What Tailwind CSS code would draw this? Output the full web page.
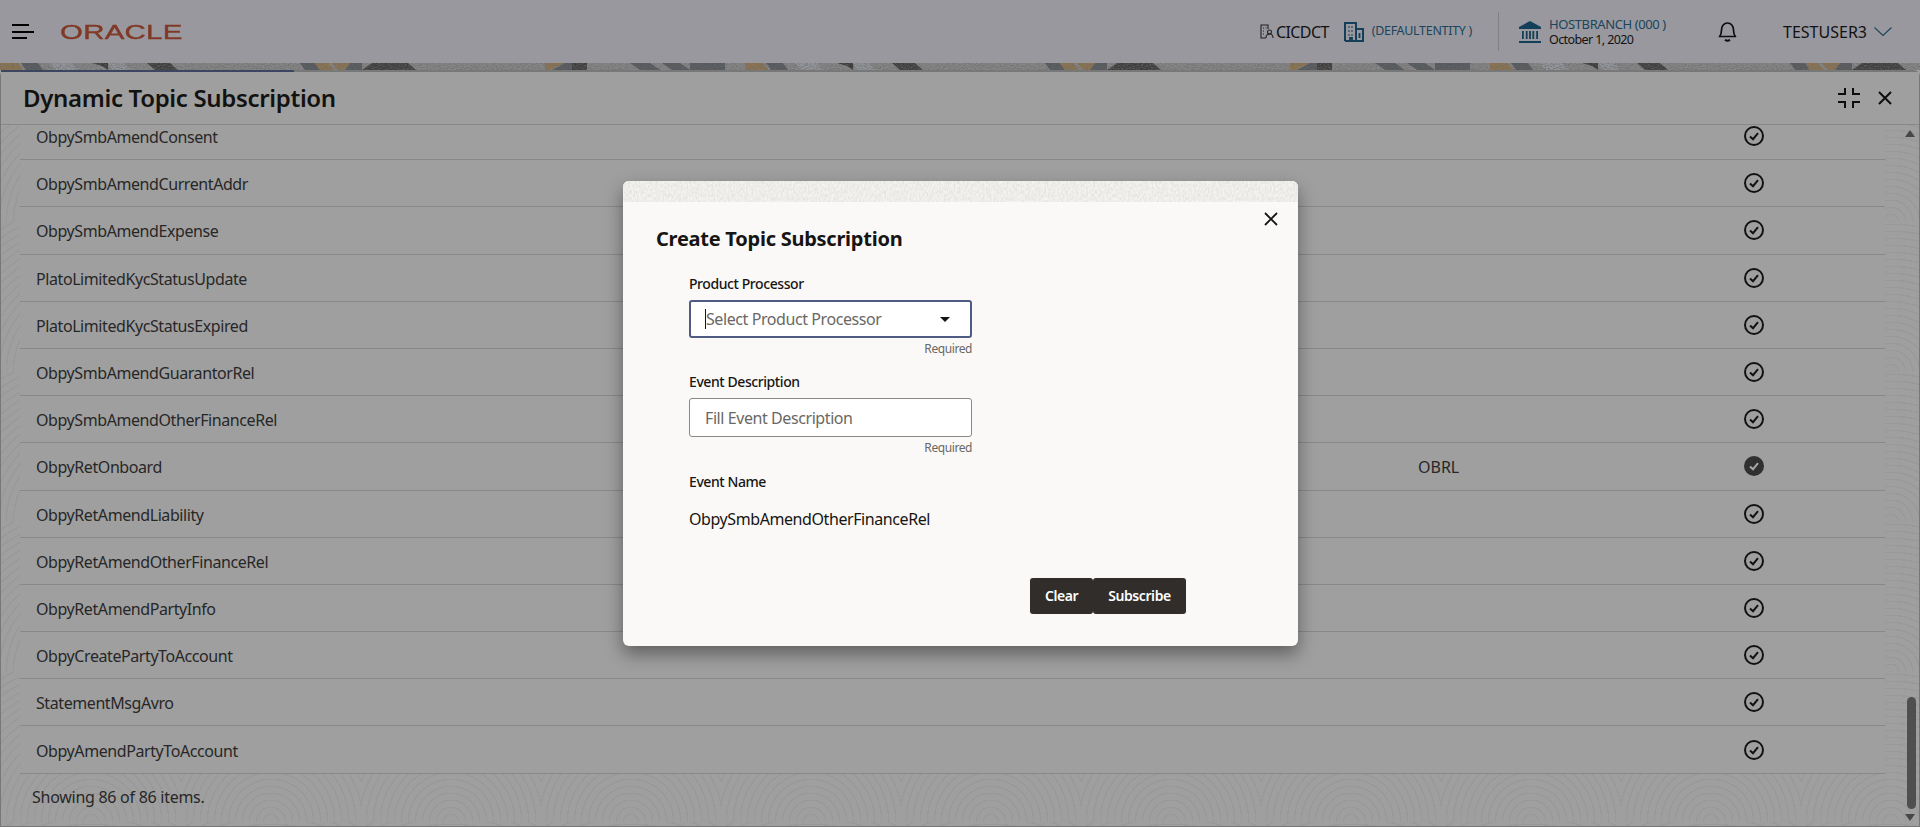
<!DOCTYPE html>
<html lang="en">
<head>
  <meta charset="utf-8">
  <meta name="viewport" content="width=device-width, initial-scale=1.0">
  <title>Dynamic Topic Subscription</title>
  <script src="https://cdn.jsdelivr.net/npm/@tailwindcss/browser@4"></script>
</head>
<body class="relative h-[827px] w-full overflow-hidden bg-[#f5f5f5] font-['Noto_Sans',sans-serif] tracking-[-0.42px] text-[#3c3c3c]">

  <!-- top bar -->
  <header class="flex h-[63px] items-center bg-[#eceaf4] text-[#1c1c1c]">
    <button class="ml-3 flex w-[22px] flex-col gap-[4.6px]">
      <span class="h-[2px] w-[17px] bg-black"></span>
      <span class="h-[2px] w-[22px] bg-black"></span>
      <span class="h-[2px] w-[15px] bg-black"></span>
    </button>
    <span class="ml-[26px] w-[120px] origin-left scale-x-[1.4] font-['Liberation_Sans',sans-serif] text-[21px] leading-none tracking-[0.2px] text-[#c4583a] [-webkit-text-stroke:0.4px_#c4583a]">ORACLE</span>

    <div class="ml-auto flex items-center">
      <svg class="h-[15px] w-[14px]" viewBox="0 0 14 15" fill="none" stroke="#333" stroke-width="1.1"><path d="M6 14H1V1h7v4"/><path d="M3 4h1M5.500 4h1M3 7h1M3 10h1"/><circle cx="9.500" cy="8" r="2"/><path d="M6 14c0-3 1.500-4 3.500-4s3.500 1 3.500 4"/></svg>
      <span class="ml-[2px] text-base tracking-[-0.6px]">CICDCT</span>
      <svg class="ml-[15px] h-[20px] w-[20px]" viewBox="0 0 20 20" fill="none" stroke="#1f6288" stroke-width="2"><path d="M1 19V1h11v18M12 7h7v12H1"/><path d="M4.500 5h1M7.500 5h1M4.500 9h1M7.500 9h1M4.500 13h1M7.500 13h1M15.500 11v5M6 19v-3h2v3" stroke-width="1.800"/></svg>
      <span class="ml-2 text-[12.5px] tracking-[-0.3px] text-[#2b6a8e]">(DEFAULTENTITY )</span>
      <span class="ml-[26px] h-[39px] w-px bg-[#c9c7d2]"></span>
      <svg class="ml-[20px] h-[22px] w-[22px]" viewBox="0 0 22 22" fill="#1f6288"><path d="M11 0 22 6v2H0V6z"/><path d="M3 10h1.800v8H3zM6.800 10h1.800v8H6.800zM10.100 10h1.800v8h-1.800zM13.400 10h1.800v8h-1.800zM17.200 10H19v8h-1.800zM0 20h22v2H0z"/></svg>
      <div class="ml-2 flex w-[142px] flex-col text-[13px] leading-[15px]">
        <span class="tracking-[-0.4px] text-[#2b6a8e]">HOSTBRANCH (000 )</span>
        <span class="text-[12.5px] tracking-[-0.6px]">October 1, 2020</span>
      </div>
      <svg class="ml-[27px] h-[21px] w-[19px]" viewBox="0 0 19 21" fill="none" stroke="#141414" stroke-width="1.700"><path d="M1.500 15.500c1.500-1.500 2-3 2-6.500 0-4 2.500-7 6-7s6 3 6 7c0 3.500.5 5 2 6.500z" stroke-linejoin="round"/><path d="M7 18.800c1.500 1.200 3.500 1.200 5 0" stroke-width="2"/></svg>
      <span class="ml-[46px] text-base tracking-normal">TESTUSER3</span>
      <svg class="ml-[7px] mr-[28px] h-[9px] w-[18px]" viewBox="0 0 18 9" fill="none" stroke="#2b6a8e" stroke-width="1.100"><path d="M.5.5 9 8.500 17.500.5"/></svg>
    </div>
  </header>

  <!-- decorative strip under the bar, one tile repeats every 745px -->
  <svg class="block h-[7px] w-full" preserveAspectRatio="none">
    <defs>
      <pattern id="band" width="745" height="7" patternUnits="userSpaceOnUse">
        <rect width="745" height="7" fill="#d0d0d0"/>
        <polygon points="0,0 18,0 23,7 0,7" fill="#dcb478"/>
        <polygon points="21,0 38,0 43,7 26,7" fill="#83898d"/>
        <polygon points="50,0 72,0 78,7 56,7" fill="#e4e9ee"/>
        <polygon points="92,0 108,0 108,7 102,3" fill="#585755"/>
        <polygon points="108,0 124,0 130,7 112,7" fill="#e4e9ee"/>
        <polygon points="147,0 170,0 178,7 155,7" fill="#5e5d5a"/>
        <polygon points="300,0 315,0 320,7 305,7" fill="#83898d"/>
        <polygon points="315,0 328,0 334,7 320,7" fill="#dcb478"/>
        <polygon points="332,0 350,0 345,7 338,7" fill="#dcb478"/>
        <polygon points="350,0 362,0 362,7 345,7" fill="#83898d"/>
        <polygon points="362,7 372,0 385,0 395,7" fill="#5e5d5a"/>
        <polygon points="382,0 408,0 416,7 392,7" fill="#5e5d5a"/>
        <polygon points="545,0 565,0 550,7 545,7" fill="#dcb478"/>
        <polygon points="565,0 572,0 572,7 552,7" fill="#83898d"/>
        <rect x="572" width="15" height="7" fill="#5e5d5a"/>
        <polygon points="630,0 650,0 660,7 640,7" fill="#83898d"/>
        <polygon points="662,0 680,0 690,7 672,7" fill="#83898d"/>
        <rect x="690" width="35" height="7" fill="#83898d"/>
      </pattern>
      <filter id="bandgrain" x="0" y="0" width="100%" height="100%">
        <feTurbulence type="fractalNoise" baseFrequency="0.6 0.9" numOctaves="2" seed="7"/>
        <feColorMatrix type="matrix" values="0 0 0 0 0.35  0 0 0 0 0.35  0 0 0 0 0.38  1.6 0 0 0 -0.55"/>
      </filter>
    </defs>
    <rect width="100%" height="7" fill="url(#band)"/>
    <rect width="100%" height="7" filter="url(#bandgrain)"/>
  </svg>

  <!-- main panel -->
  <main class="relative flex h-[757px] flex-col rounded-t-md border border-t-2 border-[#b8b8b8] bg-[#f5f5f5]">
    <span class="absolute -top-[2px] left-0 h-[2px] w-[293px] bg-[#5f6c95]"></span>

    <!-- wave texture behind the table -->
    <div class="absolute inset-0 bg-[repeating-radial-gradient(circle_at_50%_100%,rgba(0,0,0,0.04)_0_1.5px,transparent_1.5px_7px)] bg-[size:180px_150px]"></div>

    <div class="relative flex h-[53px] shrink-0 items-center justify-between border-b border-[#d2d2d2] bg-[#f5f5f5] pl-[22px] pr-[27px]">
      <h1 class="text-2xl font-semibold tracking-[-0.33px] text-[#1d1c1a]">Dynamic Topic Subscription</h1>
      <div class="flex items-center gap-[18px]">
        <svg class="h-[20px] w-[22px]" viewBox="0 0 22 20" fill="none" stroke="#161513" stroke-width="2"><path d="M0 6h7V0M15 0v6h7M0 14h7v6M22 14h-7v6"/></svg>
        <svg class="h-[14px] w-[14px]" viewBox="0 0 14 14" fill="none" stroke="#161513" stroke-width="2"><path d="m1 1 12 12M13 1 1 13"/></svg>
      </div>
    </div>

    <div class="relative min-h-0 flex-1 overflow-hidden">
      <div id="rows" class="-mt-[12px] ml-[19px] mr-[34px]"></div>
    </div>

    <p class="relative h-[51px] shrink-0 pl-[31px] pt-[10px] text-base leading-[24px] tracking-[-0.27px]">Showing 86 of 86 items.</p>

    <!-- scrollbar -->
    <span class="absolute right-[4px] top-[58px] h-0 w-0 border-x-[5px] border-b-[7px] border-x-transparent border-b-[#6e6e6e]"></span>
    <span class="absolute right-[3px] top-[625px] h-[112px] w-[9px] rounded-full bg-[#7a7a7a]"></span>
    <span class="absolute right-[4px] top-[742px] h-0 w-0 border-x-[5px] border-t-[7px] border-x-transparent border-t-[#6e6e6e]"></span>
  </main>

  <!-- scrim and dialog -->
  <div class="absolute inset-0 bg-black/35"></div>

  <section class="absolute left-[623px] top-[181px] h-[465px] w-[675px] overflow-hidden rounded-md bg-[#faf9f7] text-[#161513] shadow-[0_8px_18px_rgba(0,0,0,0.4)]">
    <svg class="block h-[21px] w-full">
      <defs>
        <filter id="grain" x="0" y="0" width="100%" height="100%">
          <feTurbulence type="fractalNoise" baseFrequency="0.55 0.3" numOctaves="2" seed="4"/>
          <feColorMatrix type="matrix" values="0 0 0 0 0.78  0 0 0 0 0.77  0 0 0 0 0.75  2.2 0 0 0 -0.7"/>
        </filter>
      </defs>
      <rect width="100%" height="21" fill="#f4f3f0"/>
      <rect width="100%" height="21" filter="url(#grain)"/>
    </svg>

    <button class="absolute right-[20px] top-[31px]">
      <svg class="h-[14px] w-[14px]" viewBox="0 0 14 14" fill="none" stroke="#161513" stroke-width="1.800"><path d="m1 1 12 12M13 1 1 13"/></svg>
    </button>

    <h2 class="ml-[33px] mt-[22px] text-xl font-bold leading-[30px] tracking-[-0.25px]">Create Topic Subscription</h2>

    <form class="ml-[66px] mt-[20px] w-[283px]">
      <label class="block text-sm font-medium leading-[20px]">Product Processor</label>
      <div class="mt-[6px] flex h-[38px] items-center justify-between rounded-[3px] border-2 border-[#505b84] bg-white pl-[14px] pr-[20px]">
        <span class="border-l border-[#161513] text-base leading-[20px] text-[#6a6864]">Select Product Processor</span>
        <span class="h-0 w-0 border-x-[5px] border-t-[5px] border-x-transparent border-t-[#161513]"></span>
      </div>
      <p class="mt-[3px] text-right text-xs leading-[16px] text-[#6a6864]">Required</p>

      <label class="mt-[15px] block text-sm font-medium leading-[20px]">Event Description</label>
      <div class="mt-[6px] flex h-[39px] items-center rounded-[3px] border border-[#8a8886] bg-white pl-[15px]">
        <span class="text-base leading-[20px] text-[#6a6864]">Fill Event Description</span>
      </div>
      <p class="mt-[3px] text-right text-xs leading-[16px] text-[#6a6864]">Required</p>

      <label class="mt-[16px] block text-sm font-medium leading-[20px]">Event Name</label>
      <p class="mt-[15px] whitespace-nowrap text-base leading-[24px]">ObpySmbAmendOtherFinanceRel</p>
    </form>

    <div class="absolute left-[407px] top-[397px] flex text-sm font-semibold text-white">
      <button class="h-[36px] w-[63px] rounded-[3px] bg-[#312d2a]">Clear</button>
      <button class="h-[36px] w-[93px] rounded-[3px] bg-[#312d2a]">Subscribe</button>
    </div>
  </section>

  <script>
    const topics = [
      "ObpySmbAmendConsent", "ObpySmbAmendCurrentAddr", "ObpySmbAmendExpense",
      "PlatoLimitedKycStatusUpdate", "PlatoLimitedKycStatusExpired", "ObpySmbAmendGuarantorRel",
      "ObpySmbAmendOtherFinanceRel", "ObpyRetOnboard", "ObpyRetAmendLiability",
      "ObpyRetAmendOtherFinanceRel", "ObpyRetAmendPartyInfo", "ObpyCreatePartyToAccount",
      "StatementMsgAvro", "ObpyAmendPartyToAccount"
    ];
    const tick = '<svg class="h-[20px] w-[20px]" viewBox="0 0 20 20" fill="none" stroke="#1d1d1d" stroke-width="2"><circle cx="10" cy="10" r="9"/><path d="m6 10.500 3 2.700 5-6"/></svg>';
    const tickOn = '<svg class="h-[20px] w-[20px]" viewBox="0 0 20 20" fill="none"><circle cx="10" cy="10" r="10" fill="#4a4a4a"/><path d="m6 10.500 3 2.700 5-6" stroke="#fff" stroke-width="2"/></svg>';
    document.getElementById("rows").innerHTML = topics.map((t) => {
      const on = t === "ObpyRetOnboard";
      return `<div class="flex h-[47.2px] items-center border-b border-[#d2d2d2] bg-[#f5f5f5]">
        <span class="ml-4 w-[1382px] pt-[2px]">${t}</span>
        <span class="w-[326px] pt-[1px] tracking-normal">${on ? "OBRL" : ""}</span>
        ${on ? tickOn : tick}
      </div>`;
    }).join("");
  </script>
</body>
</html>
